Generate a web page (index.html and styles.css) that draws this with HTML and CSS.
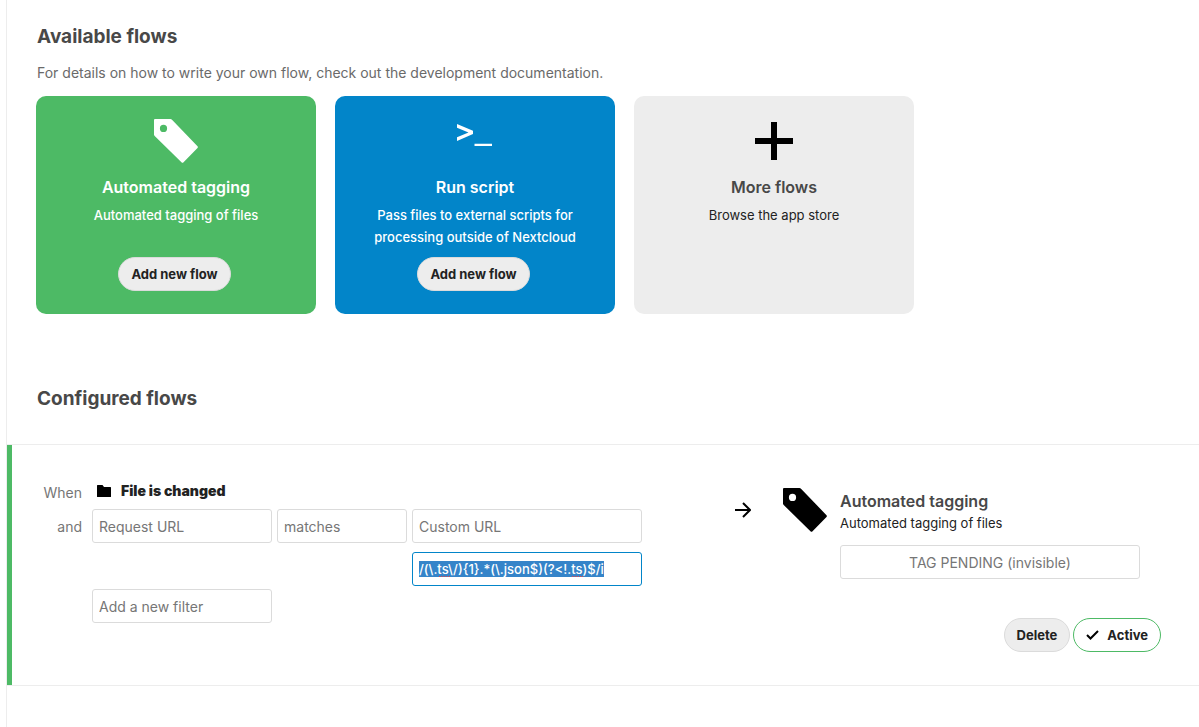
FILE: index.html
```html
<!DOCTYPE html>
<html lang="en">
<head>
<meta charset="utf-8">
<title>Flow</title>
<link rel="stylesheet" href="styles.css">
</head>
<body>
<svg class="sprite" aria-hidden="true">
  <symbol id="tag" viewBox="0 0 44 44">
    <path fill-rule="evenodd" d="M1 0H16.500Q17.300 0 18 .7L43.500 27.200Q44.300 28 43.500 28.900L29.300 43.400Q28.500 44.200 27.700 43.400L.7 17Q0 16.300 0 15.500V1Q0 0 1 0ZM9.500 5.800a3.600 3.600 0 1 0 0 7.200a3.600 3.600 0 1 0 0-7.200Z"/>
  </symbol>
</svg>
<main class="content">
  <section class="available">
    <h2 class="heading">Available flows</h2>
    <p class="hint"><a class="hint-link" href="#docs">For details on how to write your own flow, check out the development documentation.</a></p>
    <div class="cards">
      <article class="card card-green">
        <svg class="card-icon" viewBox="0 0 50 50" aria-hidden="true"><use href="#tag" x="3" y="3" width="44" height="44"/></svg>
        <h3 class="card-title">Automated tagging</h3>
        <p class="card-text">Automated tagging of files</p>
        <button class="button card-button" type="button">Add new flow</button>
      </article>
      <article class="card card-blue">
        <svg class="card-icon" viewBox="0 0 50 50" aria-hidden="true"><path d="M7 8L23 14.700V18L7 25V21.300L18.500 16.500L7 11.700ZM24.500 27.700H42V30H24.500Z"/></svg>
        <h3 class="card-title">Run script</h3>
        <p class="card-text">Pass files to external scripts for processing outside of Nextcloud</p>
        <button class="button card-button" type="button">Add new flow</button>
      </article>
      <a class="card card-grey" href="#apps">
        <svg class="card-icon" viewBox="0 0 50 50" aria-hidden="true"><path d="M22 6h6v16h16v6H28v16h-6V28H6v-6h16Z"/></svg>
        <h3 class="card-title">More flows</h3>
        <p class="card-text">Browse the app store</p>
      </a>
    </div>
  </section>
  <section>
    <h2 class="heading configured-heading">Configured flows</h2>
    <div class="rule">
      <div class="trigger">
        <span class="trigger-label">When</span>
        <div class="event">
          <svg class="folder" viewBox="0 0 14 12" aria-hidden="true"><path d="M.6 0H5.500L7 2H13.400Q14 2 14 2.600V11.400Q14 12 13.400 12H.6Q0 12 0 11.400V.6Q0 0 .6 0Z"/></svg>
          <span>File is changed</span>
        </div>
        <span class="trigger-label">and</span>
        <div class="check">
          <select class="field" aria-label="Filter"><option>Request URL</option></select>
          <select class="field" aria-label="Comparator"><option>matches</option></select>
          <select class="field" aria-label="Value"><option>Custom URL</option></select>
          <div class="pattern">
            <input class="field pattern-input" id="pattern" type="text" aria-label="Pattern" spellcheck="false" value="/(\.ts\/){1}.*(\.json$)(?&lt;!.ts)$/i">
            <i class="typo typo-first"></i>
            <i class="typo typo-second"></i>
          </div>
        </div>
        <select class="field new-filter" aria-label="New filter"><option>Add a new filter</option></select>
      </div>
      <svg class="arrow" viewBox="0 0 16 16" aria-hidden="true"><path d="M0 8H15M8 1L15 8L8 15"/></svg>
      <div class="action">
        <div class="operation">
          <svg class="operation-icon" viewBox="0 0 44 44" aria-hidden="true"><use href="#tag"/></svg>
          <div class="operation-body">
            <h3 class="operation-title">Automated tagging</h3>
            <p class="operation-text">Automated tagging of files</p>
            <select class="field tag-field" aria-label="Tag"><option>TAG PENDING (invisible)</option></select>
          </div>
        </div>
        <div class="buttons">
          <button class="button" type="button">Delete</button>
          <button class="button button-active" type="button">
            <svg class="tick" viewBox="0 0 13 10" aria-hidden="true"><path d="M1 5L4.500 8.500L12 1"/></svg>
            Active
          </button>
        </div>
      </div>
    </div>
  </section>
</main>
<script src="script.js"></script>
</body>
</html>
```

FILE: script.js
```js
const pattern = document.getElementById("pattern");
pattern.focus();
pattern.select();
```

FILE: styles.css
```css
* {
  box-sizing: border-box;
}

body {
  margin: 0;
  background: #fff;
  color: #222;
  font-family: Inter, "Liberation Sans", sans-serif;
  font-size: 13px;
  line-height: 22px;
}

h2, h3, p {
  margin: 0;
}

.sprite {
  display: none;
}

.content {
  min-height: 100vh;
  margin-left: 6px;
  border-left: 1px solid #ededed;
}

.available {
  padding: 22px 29px 0;
}

.heading {
  color: #484848;
  font-size: 19px;
  font-weight: 700;
  line-height: 30px;
}

.available .heading,
.hint {
  padding-left: 1px;
}

.hint {
  margin: 10px 0 12px;
  font-size: 14px;
}

.hint-link {
  color: #6a6a6a;
  text-decoration: none;
}

.cards {
  display: flex;
  flex-wrap: wrap;
  gap: 19px;
}

.card {
  display: flex;
  flex-direction: column;
  align-items: center;
  width: 280px;
  min-height: 218px;
  padding: 20px 32px 23px;
  border-radius: 10px;
  color: #fff;
  fill: #fff;
  text-align: center;
  text-decoration: none;
}

.card-green {
  background: #4dba65;
}

.card-blue {
  background: #0285c9;
}

.card-grey {
  background: #ededed;
  color: #222;
  fill: #000;
}

.card-icon {
  width: 50px;
  height: 50px;
}

.card-title {
  margin: 10px 0 6px;
  font-size: 16px;
  font-weight: 600;
}

.card-grey .card-title {
  color: #484848;
}

.card-text {
  font-weight: 500;
}

.card-grey .card-text {
  font-weight: 400;
}

.button {
  height: 34px;
  padding: 0 12px;
  border: 1px solid #dbdbdb;
  border-radius: 17px;
  background: #ededed;
  color: #222;
  font: 700 13px Inter, "Liberation Sans", sans-serif;
}

.card-button {
  margin: auto 3px 0 0;
}

.configured-heading {
  padding: 70px 30px 30px;
}

.rule {
  display: flex;
  align-items: flex-start;
  min-height: 242px;
  padding: 35px 38px 33px 30px;
  border: solid #ededed;
  border-width: 1px 0;
  background: linear-gradient(#4dba65, #4dba65) left / 5px 100% no-repeat;
}

.trigger {
  display: grid;
  grid-template-columns: 45px auto;
  column-gap: 10px;
  flex: 1;
  justify-content: start;
}

.trigger-label {
  padding-top: 1px;
  color: #767676;
  font-size: 14px;
  line-height: 24px;
  text-align: right;
}

.trigger-label:nth-of-type(2) {
  padding-top: 6px;
}

.event {
  display: flex;
  align-items: center;
  gap: 10px;
  height: 29px;
  padding: 0 0 7px 5px;
  font-size: 14px;
  font-weight: 900;
}

.folder {
  width: 14px;
  height: 12px;
  fill: #000;
}

.check {
  display: grid;
  grid-template-columns: 180px 130px 230px;
  gap: 9px 5px;
}

.field {
  width: 100%;
  height: 34px;
  padding: 0 6px;
  border: 1px solid #dbdbdb;
  border-radius: 3px;
  outline: 0;
  appearance: none;
  background: #fff;
  color: #767676;
  font: 400 14px Inter, "Liberation Sans", sans-serif;
}

.pattern {
  position: relative;
  grid-column: 3;
}

.pattern-input {
  display: block;
  border-color: #0285c9;
  color: #222;
  font-size: 13px;
  font-weight: 500;
}

.pattern-input::selection {
  background: #3584c9;
  color: #fff;
}

.typo {
  position: absolute;
  top: 24px;
  width: 11px;
  border-top: 1px dotted #e34848;
}

.typo-first {
  left: 27px;
}

.typo-second {
  left: 160px;
}

.new-filter {
  grid-column: 2;
  width: 180px;
  margin-top: 3px;
}

.arrow {
  flex: none;
  width: 16px;
  height: 16px;
  margin: 22px 32px 0;
  fill: none;
  stroke: #000;
  stroke-width: 2;
}

.action {
  width: 378px;
  padding-top: 8px;
}

.operation {
  display: flex;
  gap: 13px;
}

.operation-icon {
  flex: none;
  width: 44px;
  height: 44px;
}

.operation-body {
  width: 300px;
  padding-top: 2px;
}

.operation-title {
  color: #484848;
  font-size: 16px;
  font-weight: 600;
}

.operation-text {
  margin-bottom: 11px;
}

.tag-field {
  display: block;
  text-align: center;
  text-align-last: center;
}

.buttons {
  display: flex;
  justify-content: flex-end;
  gap: 3px;
  margin-top: 39px;
}

.button-active {
  display: flex;
  align-items: center;
  gap: 8px;
  border-color: #4dba65;
  background: #fff;
}

.tick {
  width: 13px;
  height: 10px;
  fill: none;
  stroke: #000;
  stroke-width: 2;
}
```
